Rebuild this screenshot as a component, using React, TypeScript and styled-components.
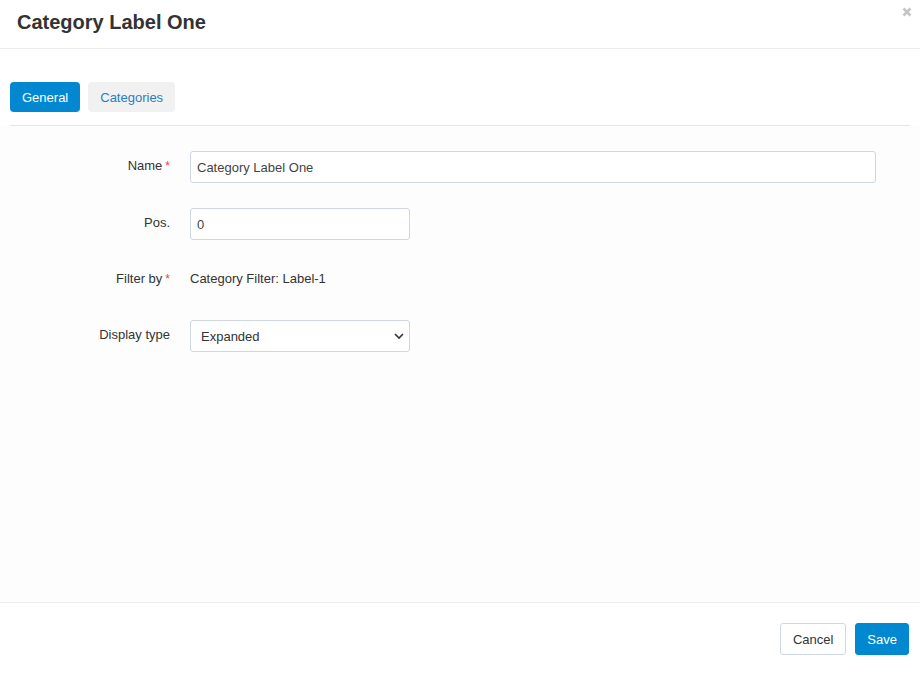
import React, { FC, useState } from "react";
import styled, { createGlobalStyle } from "styled-components";

const GlobalStyle = createGlobalStyle`
  html, body {
    margin: 0;
    padding: 0;
    background: #fff;
  }
  body {
    font-family: "Liberation Sans", Arial, sans-serif;
    color: #333;
  }
  * {
    box-sizing: border-box;
  }
`;

const Modal = styled.div`
  width: 920px;
  height: 675px;
  display: flex;
  flex-direction: column;
  background: #fff;
`;

const Header = styled.div`
  position: relative;
  height: 49px;
  flex: none;
  display: flex;
  align-items: center;
  padding: 0 17px;
  border-bottom: 1px solid #ececec;
`;

const Title = styled.h1`
  margin: 0;
  margin-top: -4px;
  font-size: 20px;
  font-weight: bold;
  color: #333;
`;

const Close = styled.button`
  position: absolute;
  top: 4px;
  right: 6px;
  border: 0;
  background: none;
  padding: 0;
  width: 14px;
  height: 16px;
  display: flex;
  align-items: center;
  justify-content: center;
  cursor: pointer;
`;

const Body = styled.div`
  flex: 1;
  display: flex;
  flex-direction: column;
  background: #fdfdfd;
`;

const TabArea = styled.div`
  background: #fff;
  padding: 33px 10px 0;
`;

const TabBar = styled.div`
  display: flex;
  gap: 8px;
  padding-bottom: 13px;
  border-bottom: 1px solid #e1e5ee;
`;

const Tab = styled.button<{ $active?: boolean }>`
  height: 30px;
  padding: 0 12px;
  border: 0;
  border-radius: 4px;
  font-family: inherit;
  font-size: 13px;
  cursor: pointer;
  background: ${(p) => (p.$active ? "#0288d1" : "#f1f1f1")};
  color: ${(p) => (p.$active ? "#fff" : "#2a7ec0")};
`;

const Form = styled.div`
  display: grid;
  grid-template-columns: 170px 1fr;
  column-gap: 20px;
  row-gap: 25px;
  padding: 25px 44px 0 0;
  align-items: center;
`;

const Label = styled.label`
  justify-self: end;
  font-size: 13px;
  color: #333;
  display: flex;
  align-items: center;
  gap: 3px;
  margin-top: -3px;
`;

const Required = styled.span`
  color: #e0474c;
  font-size: 12px;
`;

const Input = styled.input<{ $width?: number }>`
  height: 32px;
  width: ${(p) => (p.$width ? `${p.$width}px` : "100%")};
  border: 1px solid #cfd8e2;
  border-radius: 3px;
  background: #fff;
  padding: 0 6px;
  font-family: inherit;
  font-size: 13px;
  color: #444;
  outline: none;
`;

const StaticValue = styled.div`
  height: 30px;
  padding-bottom: 3px;
  display: flex;
  align-items: center;
  font-size: 13px;
  color: #333;
`;

const SelectWrap = styled.div`
  position: relative;
  width: 220px;
`;

const Select = styled.select`
  appearance: none;
  width: 100%;
  height: 32px;
  border: 1px solid #cfd8e2;
  border-radius: 3px;
  background: #fff;
  padding: 0 10px;
  font-family: inherit;
  font-size: 13px;
  color: #333;
  outline: none;
`;

const Chevron = styled.svg`
  position: absolute;
  right: 6px;
  top: 12px;
  pointer-events: none;
`;

const Footer = styled.div`
  height: 73px;
  flex: none;
  border-top: 1px solid #ececec;
  display: flex;
  justify-content: flex-end;
  align-items: flex-start;
  gap: 9px;
  padding: 20px 11px 0 0;
`;

const Button = styled.button<{ $primary?: boolean }>`
  height: 32px;
  padding: 0 ${(p) => (p.$primary ? "11px" : "12px")};
  border-radius: 3px;
  font-family: inherit;
  font-size: 13px;
  cursor: pointer;
  border: 1px solid ${(p) => (p.$primary ? "#0288d1" : "#cfd8e2")};
  background: ${(p) => (p.$primary ? "#0288d1" : "#fff")};
  color: ${(p) => (p.$primary ? "#fff" : "#333")};
`;

const App: FC = () => {
  const [tab, setTab] = useState<string>("general");
  const [name, setName] = useState<string>("Category Label One");
  const [pos, setPos] = useState<string>("0");
  const [display, setDisplay] = useState<string>("expanded");

  return (
    <Modal>
      <GlobalStyle />
      <Header>
        <Title>Category Label One</Title>
        <Close aria-label="Close">
          <svg width="10" height="10" viewBox="0 0 10 10">
            <path d="M1.5 1.5 L8.5 8.5 M8.5 1.5 L1.5 8.5" stroke="#c4c4c4" strokeWidth="2.6" strokeLinecap="butt" />
          </svg>
        </Close>
      </Header>
      <Body>
        <TabArea>
          <TabBar>
            <Tab $active={tab === "general"} onClick={() => setTab("general")}>
              General
            </Tab>
            <Tab $active={tab === "categories"} onClick={() => setTab("categories")}>
              Categories
            </Tab>
          </TabBar>
        </TabArea>
        <Form>
          <Label>
            Name<Required>*</Required>
          </Label>
          <Input value={name} onChange={(e) => setName(e.target.value)} />

          <Label>Pos.</Label>
          <Input $width={220} value={pos} onChange={(e) => setPos(e.target.value)} />

          <Label>
            Filter by<Required>*</Required>
          </Label>
          <StaticValue>Category Filter: Label-1</StaticValue>

          <Label>Display type</Label>
          <SelectWrap>
            <Select value={display} onChange={(e) => setDisplay(e.target.value)}>
              <option value="expanded">Expanded</option>
              <option value="collapsed">Collapsed</option>
            </Select>
            <Chevron width="10" height="8" viewBox="0 0 10 8">
              <path d="M1 2 L5 6 L9 2" fill="none" stroke="#333" strokeWidth="1.6" />
            </Chevron>
          </SelectWrap>
        </Form>
      </Body>
      <Footer>
        <Button>Cancel</Button>
        <Button $primary>Save</Button>
      </Footer>
    </Modal>
  );
};

export default App;
